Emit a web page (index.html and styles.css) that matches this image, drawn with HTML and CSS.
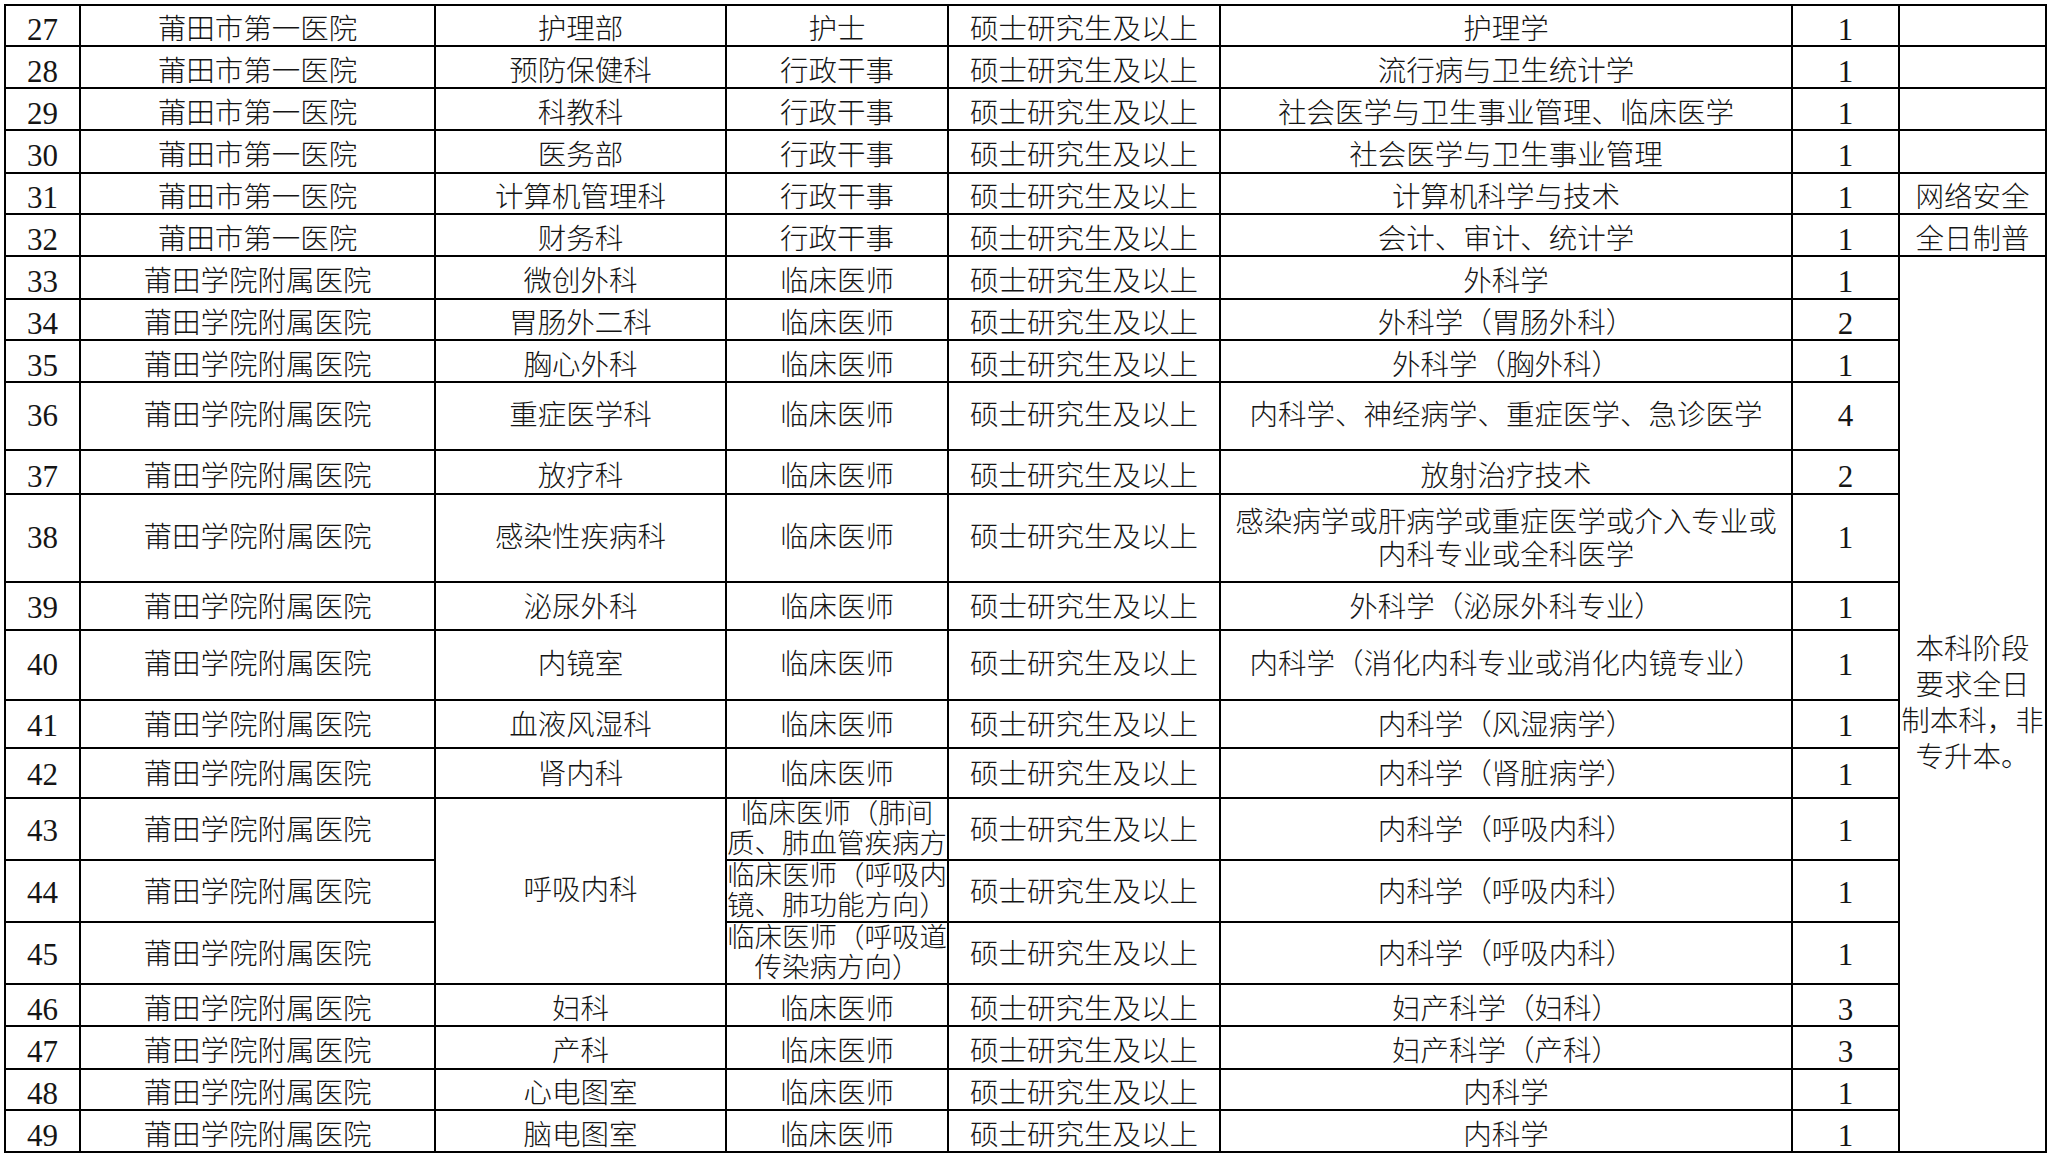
FILE: index.html
```html
<!DOCTYPE html>
<html lang="zh-CN">
<head>
<meta charset="utf-8">
<title>岗位表</title>
<link rel="stylesheet" href="styles.css">
</head>
<body>
<table class="grid">
  <colgroup>
    <col class="c-no"><col class="c-unit"><col class="c-dept"><col class="c-post"><col class="c-edu"><col class="c-major"><col class="c-num"><col class="c-note">
  </colgroup>
  <tbody>
    <tr class="h41 s"><td class="num">27</td><td>莆田市第一医院</td><td>护理部</td><td>护士</td><td>硕士研究生及以上</td><td>护理学</td><td class="num">1</td><td></td></tr>
    <tr class="h42 s"><td class="num">28</td><td>莆田市第一医院</td><td>预防保健科</td><td>行政干事</td><td>硕士研究生及以上</td><td>流行病与卫生统计学</td><td class="num">1</td><td></td></tr>
    <tr class="h42 s"><td class="num">29</td><td>莆田市第一医院</td><td>科教科</td><td>行政干事</td><td>硕士研究生及以上</td><td>社会医学与卫生事业管理、临床医学</td><td class="num">1</td><td></td></tr>
    <tr class="h43 s"><td class="num">30</td><td>莆田市第一医院</td><td>医务部</td><td>行政干事</td><td>硕士研究生及以上</td><td>社会医学与卫生事业管理</td><td class="num">1</td><td></td></tr>
    <tr class="h41 s"><td class="num">31</td><td>莆田市第一医院</td><td>计算机管理科</td><td>行政干事</td><td>硕士研究生及以上</td><td>计算机科学与技术</td><td class="num">1</td><td>网络安全</td></tr>
    <tr class="h42 s"><td class="num">32</td><td>莆田市第一医院</td><td>财务科</td><td>行政干事</td><td>硕士研究生及以上</td><td>会计、审计、统计学</td><td class="num">1</td><td>全日制普</td></tr>
    <tr class="h43 s"><td class="num">33</td><td>莆田学院附属医院</td><td>微创外科</td><td>临床医师</td><td>硕士研究生及以上</td><td>外科学</td><td class="num">1</td>
      <td class="note" rowspan="17">本科阶段<br>要求全日<br>制本科，非<br>专升本。</td></tr>
    <tr class="h41 s"><td class="num">34</td><td>莆田学院附属医院</td><td>胃肠外二科</td><td>临床医师</td><td>硕士研究生及以上</td><td>外科学（胃肠外科）</td><td class="num">2</td></tr>
    <tr class="h42 s"><td class="num">35</td><td>莆田学院附属医院</td><td>胸心外科</td><td>临床医师</td><td>硕士研究生及以上</td><td>外科学（胸外科）</td><td class="num">1</td></tr>
    <tr class="h68"><td class="num">36</td><td>莆田学院附属医院</td><td>重症医学科</td><td>临床医师</td><td>硕士研究生及以上</td><td>内科学、神经病学、重症医学、急诊医学</td><td class="num">4</td></tr>
    <tr class="h44 s"><td class="num">37</td><td>莆田学院附属医院</td><td>放疗科</td><td>临床医师</td><td>硕士研究生及以上</td><td>放射治疗技术</td><td class="num">2</td></tr>
    <tr class="h88"><td class="num">38</td><td>莆田学院附属医院</td><td>感染性疾病科</td><td>临床医师</td><td>硕士研究生及以上</td><td class="two">感染病学或肝病学或重症医学或介入专业或<br>内科专业或全科医学</td><td class="num">1</td></tr>
    <tr class="h48 m"><td class="num">39</td><td>莆田学院附属医院</td><td>泌尿外科</td><td>临床医师</td><td>硕士研究生及以上</td><td>外科学（泌尿外科专业）</td><td class="num">1</td></tr>
    <tr class="h70"><td class="num">40</td><td>莆田学院附属医院</td><td>内镜室</td><td>临床医师</td><td>硕士研究生及以上</td><td>内科学（消化内科专业或消化内镜专业）</td><td class="num">1</td></tr>
    <tr class="h48 m"><td class="num">41</td><td>莆田学院附属医院</td><td>血液风湿科</td><td>临床医师</td><td>硕士研究生及以上</td><td>内科学（风湿病学）</td><td class="num">1</td></tr>
    <tr class="h50 m"><td class="num">42</td><td>莆田学院附属医院</td><td>肾内科</td><td>临床医师</td><td>硕士研究生及以上</td><td>内科学（肾脏病学）</td><td class="num">1</td></tr>
    <tr class="h62 m"><td class="num">43</td><td>莆田学院附属医院</td><td class="merged" rowspan="3">呼吸内科</td><td class="wrap"><div class="lines">临床医师（肺间<br>质、肺血管疾病方</div></td><td>硕士研究生及以上</td><td>内科学（呼吸内科）</td><td class="num">1</td></tr>
    <tr class="h62 m"><td class="num">44</td><td>莆田学院附属医院</td><td class="wrap"><div class="lines">临床医师（呼吸内<br>镜、肺功能方向）</div></td><td>硕士研究生及以上</td><td>内科学（呼吸内科）</td><td class="num">1</td></tr>
    <tr class="h62 m"><td class="num">45</td><td>莆田学院附属医院</td><td class="wrap"><div class="lines">临床医师（呼吸道<br>传染病方向）</div></td><td>硕士研究生及以上</td><td>内科学（呼吸内科）</td><td class="num">1</td></tr>
    <tr class="h42 s"><td class="num">46</td><td>莆田学院附属医院</td><td>妇科</td><td>临床医师</td><td>硕士研究生及以上</td><td>妇产科学（妇科）</td><td class="num">3</td></tr>
    <tr class="h43 s"><td class="num">47</td><td>莆田学院附属医院</td><td>产科</td><td>临床医师</td><td>硕士研究生及以上</td><td>妇产科学（产科）</td><td class="num">3</td></tr>
    <tr class="h41 s"><td class="num">48</td><td>莆田学院附属医院</td><td>心电图室</td><td>临床医师</td><td>硕士研究生及以上</td><td>内科学</td><td class="num">1</td></tr>
    <tr class="h42 s"><td class="num">49</td><td>莆田学院附属医院</td><td>脑电图室</td><td>临床医师</td><td>硕士研究生及以上</td><td>内科学</td><td class="num">1</td></tr>
  </tbody>
</table>
</body>
</html>
```

FILE: styles.css
```css
html, body {
  margin: 0;
  padding: 0;
  background: #ffffff;
}

.grid {
  margin: 4px 0 0 4px;
  width: 2043px;
  table-layout: fixed;
  border-collapse: collapse;
  font-family: "Liberation Serif", "Noto Sans CJK SC", serif;
  font-weight: 300;
  font-size: 28.5px;
  line-height: 28px;
  color: #151515;
}

.c-no { width: 75px; }
.c-unit { width: 355px; }
.c-dept { width: 291px; }
.c-post { width: 222px; }
.c-edu { width: 272px; }
.c-major { width: 572px; }
.c-num { width: 107px; }
.c-note { width: 147px; }

.grid td {
  border: 2px solid #000;
  padding: 0;
  text-align: center;
  vertical-align: middle;
  white-space: nowrap;
  overflow: hidden;
}

.h41 { height: 41px; }
.h42 { height: 42px; }
.h43 { height: 43px; }
.h44 { height: 44px; }
.h48 { height: 48px; }
.h50 { height: 50px; }
.h62 { height: 62px; }
.h68 { height: 68px; }
.h70 { height: 70px; }
.h88 { height: 88px; }

.s td { padding-top: 9px; }
.m td { padding-top: 4px; }

.grid td.num {
  font-size: 31px;
}

.grid td.two {
  line-height: 33px;
  padding-top: 2px;
}

.grid td.wrap {
  padding-top: 0;
  font-size: 27.5px;
}

.lines {
  line-height: 30px;
}

.grid td.merged {
  padding-top: 0;
}

.grid td.note {
  padding: 0;
  line-height: 36px;
}
```
